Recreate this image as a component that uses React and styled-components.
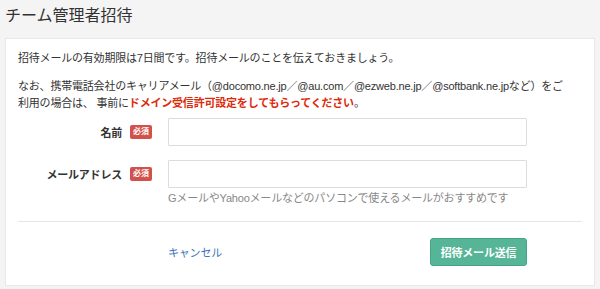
import React from "react";
import styled, { createGlobalStyle } from "styled-components";

const GlobalStyle = createGlobalStyle`
  body {
    margin: 0;
    background: #f4f4f4;
    font-family: "Liberation Sans", "Noto Sans CJK JP", sans-serif;
    color: #333;
  }
`;

function App() {
  return (
    <>
      <GlobalStyle />
      <Page>
        <Title>チーム管理者招待</Title>
        <Card>
          <Note>招待メールの有効期限は7日間です。招待メールのことを伝えておきましょう。</Note>
          <Note $last>
            なお、携帯電話会社のキャリアメール（@docomo.ne.jp／@au.com／@ezweb.ne.jp／@softbank.ne.jpなど）をご
            <br />
            利用の場合は、 事前に<Warn>ドメイン受信許可設定をしてもらってください</Warn>。
          </Note>
          <Form>
            <Label>
              名前<Badge>必須</Badge>
            </Label>
            <Input type="text" />
            <Label>
              メールアドレス<Badge>必須</Badge>
            </Label>
            <Field>
              <Input type="email" />
              <Hint>GメールやYahooメールなどのパソコンで使えるメールがおすすめです</Hint>
            </Field>
          </Form>
          <Divider />
          <Footer>
            <span />
            <Actions>
              <CancelLink href="#">キャンセル</CancelLink>
              <SubmitButton>招待メール送信</SubmitButton>
            </Actions>
          </Footer>
        </Card>
      </Page>
    </>
  );
}

export default App;

const Page = styled.div`
  width: 600px;
`;

const Title = styled.h1`
  margin: 0;
  padding: 5px 5px 0;
  height: 33px;
  font-size: 16px;
  font-weight: normal;
  line-height: 22px;
  color: #333;
`;

const Card = styled.div`
  margin: 0 5px;
  background: #fff;
  border: 1px solid #e8e8e8;
  padding: 11px 12px 19px;
`;

const Note = styled.p`
  margin: 0 0 ${({ $last }) => ($last ? "6px" : "11px")};
  font-size: 11px;
  letter-spacing: -0.2px;
  line-height: 17px;
  color: #333;
  white-space: nowrap;
`;

const Warn = styled.span`
  color: #dd2a0c;
  font-weight: bold;
`;

const Form = styled.div`
  display: grid;
  grid-template-columns: 134px 359px;
  column-gap: 16px;
  row-gap: 14px;
  align-items: start;
`;

const Label = styled.div`
  display: flex;
  justify-content: flex-end;
  align-items: center;
  gap: 8px;
  height: 28px;
  font-size: 11px;
  letter-spacing: -0.2px;
  font-weight: bold;
  color: #333;
`;

const Badge = styled.span`
  display: inline-block;
  background: #d2514a;
  color: #fff;
  font-size: 8px;
  font-weight: bold;
  letter-spacing: 0;
  line-height: 14px;
  padding: 0 3px;
  border-radius: 2px;
`;

const Field = styled.div`
  display: flex;
  flex-direction: column;
`;

const Input = styled.input`
  box-sizing: border-box;
  width: 359px;
  height: 28px;
  margin: 0;
  border: 1px solid #dcdcdc;
  border-radius: 1px;
  background: #fff;
  outline: none;
`;

const Hint = styled.div`
  margin-top: 2px;
  font-size: 11px;
  letter-spacing: -0.2px;
  line-height: 16px;
  color: #888;
`;

const Divider = styled.hr`
  margin: 15px 0 0;
  border: none;
  border-top: 1px solid #e6e6e6;
`;

const Footer = styled.div`
  display: grid;
  grid-template-columns: 134px 359px;
  column-gap: 16px;
  margin-top: 16px;
`;

const Actions = styled.div`
  display: flex;
  justify-content: space-between;
  align-items: center;
`;

const CancelLink = styled.a`
  font-size: 11px;
  letter-spacing: -0.2px;
  color: #3c74b7;
  text-decoration: none;
`;

const SubmitButton = styled.button`
  box-sizing: border-box;
  width: 97px;
  height: 28px;
  padding: 0;
  background: #55b596;
  border: 1px solid #46a586;
  border-radius: 3px;
  color: #fff;
  font-family: inherit;
  font-size: 11px;
  letter-spacing: -0.2px;
  font-weight: bold;
`;
